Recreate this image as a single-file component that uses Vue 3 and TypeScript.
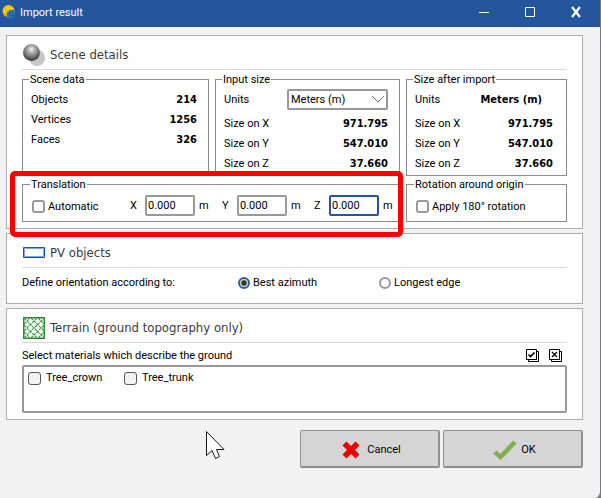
<script setup lang="ts">
import { ref } from 'vue'

interface Row {
  label: string
  value: string
}

const sceneData: Row[] = [
  { label: 'Objects', value: '214' },
  { label: 'Vertices', value: '1256' },
  { label: 'Faces', value: '326' },
]

const sizes: Row[] = [
  { label: 'Size on X', value: '971.795' },
  { label: 'Size on Y', value: '547.010' },
  { label: 'Size on Z', value: '37.660' },
]

const units = ref('Meters (m)')
const automatic = ref(false)
const rotate = ref(false)
const orientation = ref('azimuth')
const axes = ref([
  { name: 'X', value: '0.000', active: false },
  { name: 'Y', value: '0.000', active: false },
  { name: 'Z', value: '0.000', active: true },
])
const materials = ref([
  { name: 'Tree_crown', on: false },
  { name: 'Tree_trunk', on: false },
])

function setAll(on: boolean): void {
  materials.value.forEach((m) => (m.on = on))
}

function activate(name: string): void {
  axes.value.forEach((a) => (a.active = a.name === name))
}
</script>

<template>
  <div class="window">
    <header class="titlebar">
      <svg class="logo" width="14" height="14" viewBox="0 0 14 14">
        <circle cx="6.5" cy="6" r="6" fill="#fdc70c" />
        <path d="M1 9 A6 6 0 0 0 5 12 L5 8 Z" fill="#f59a12" />
        <path d="M5 7 Q8 4 13 5 L12 12 Q8 14 5 13 Z" fill="#2583c9" />
        <path d="M8 5.5V13 M10.5 5V13 M5 9.5Q9 7 12.5 8 M5 11.5Q9 10 12.5 10.5" stroke="#17518f" stroke-width=".7" fill="none" />
      </svg>
      <h1>Import result</h1>
      <div class="controls">
        <button type="button" aria-label="Minimize">
          <svg width="12" height="12" viewBox="0 0 12 12"><path d="M1 6.5H11" stroke="#fff" /></svg>
        </button>
        <button type="button" aria-label="Maximize">
          <svg width="12" height="12" viewBox="0 0 12 12"><path d="M1.5 1.5H10.5V10.5H1.5Z" stroke="#fff" fill="none" /></svg>
        </button>
        <button type="button" aria-label="Close">
          <svg width="12" height="12" viewBox="0 0 12 12"><path d="M2 1L10 11M10 1L2 11" stroke="#fff" stroke-width="2.2" /></svg>
        </button>
      </div>
    </header>

    <main>
      <section class="panel">
        <div class="head">
          <svg width="22" height="22" viewBox="0 0 22 22">
            <defs>
              <radialGradient id="ball" cx=".5" cy=".32" r=".65">
                <stop offset="0" stop-color="#f4f4f4" />
                <stop offset=".35" stop-color="#aaa" />
                <stop offset="1" stop-color="#3c3c3c" />
              </radialGradient>
            </defs>
            <circle cx="14" cy="14" r="8" fill="#c6c6c6" />
            <circle cx="8.5" cy="8.5" r="8.5" fill="url(#ball)" />
          </svg>
          <h2>Scene details</h2>
        </div>
        <div class="groups">
          <fieldset class="data">
            <legend>Scene data</legend>
            <dl>
              <div v-for="r in sceneData" :key="r.label" class="row">
                <dt>{{ r.label }}</dt>
                <dd>{{ r.value }}</dd>
              </div>
            </dl>
          </fieldset>
          <fieldset class="data">
            <legend>Input size</legend>
            <div class="row units">
              <label for="units">Units</label>
              <span class="combo">
                <select id="units" v-model="units">
                  <option>Meters (m)</option>
                  <option>Feet (ft)</option>
                </select>
                <svg width="14" height="8" viewBox="0 0 14 8"><path d="M1 1L7 7L13 1" fill="none" stroke="#777" /></svg>
              </span>
            </div>
            <dl>
              <div v-for="r in sizes" :key="r.label" class="row">
                <dt>{{ r.label }}</dt>
                <dd>{{ r.value }}</dd>
              </div>
            </dl>
          </fieldset>
          <fieldset class="data after">
            <legend>Size after import</legend>
            <dl>
              <div class="row units">
                <dt>Units</dt>
                <dd class="unit">{{ units }}</dd>
              </div>
              <div v-for="r in sizes" :key="r.label" class="row">
                <dt>{{ r.label }}</dt>
                <dd>{{ r.value }}</dd>
              </div>
            </dl>
          </fieldset>
          <div class="translation">
            <fieldset class="line">
              <legend>Translation</legend>
              <label class="check auto"><input v-model="automatic" type="checkbox" />Automatic</label>
              <div v-for="a in axes" :key="a.name" class="axis">
                <label :for="'axis-' + a.name">{{ a.name }}</label>
                <input :id="'axis-' + a.name" v-model="a.value" type="text" :class="{ active: a.active }" @focus="activate(a.name)" />
                <span>m</span>
              </div>
            </fieldset>
            <div class="highlight"></div>
          </div>
          <fieldset class="line">
            <legend>Rotation around origin</legend>
            <label class="check"><input v-model="rotate" type="checkbox" />Apply 180° rotation</label>
          </fieldset>
        </div>
      </section>

      <section class="panel">
        <div class="head">
          <svg width="22" height="22" viewBox="0 0 22 22"><path d="M.5 5.5H21.5V15.5H.5Z" fill="#fff" stroke="#0b4fd8" /><path d="M1.5 6.5H20.5V14.5H1.5Z" fill="none" stroke="#7ba3ee" /></svg>
          <h2>PV objects</h2>
        </div>
        <div class="orientation">
          <span>Define orientation according to:</span>
          <label class="check"><input v-model="orientation" type="radio" name="orientation" value="azimuth" />Best azimuth</label>
          <label class="check"><input v-model="orientation" type="radio" name="orientation" value="edge" />Longest edge</label>
        </div>
      </section>

      <section class="panel">
        <div class="head">
          <svg width="22" height="22" viewBox="0 0 22 22">
            <rect x=".75" y=".75" width="20.5" height="20.5" fill="#fff" stroke="#2e8b3a" stroke-width="1.5" />
            <path d="M1 7L7 1M1 14L14 1M1 21L21 1M8 21L21 8M15 21L21 15M1 15L7 21M1 8L14 21M1 1L21 21M8 1L21 14M15 1L21 7" stroke="#3c9447" stroke-width="1.1" stroke-dasharray="3 .8" fill="none" />
          </svg>
          <h2>Terrain (ground topography only)</h2>
        </div>
        <div class="pick">
          <span>Select materials which describe the ground</span>
          <button type="button" aria-label="Select all" @click="setAll(true)">
            <svg width="13" height="13" viewBox="0 0 13 13">
              <path d="M2.5 2.5H12.5V12.5H2.5Z" fill="#fff" stroke="#000" />
              <path d="M.5 .5H10.5V10.5H.5Z" fill="#fff" stroke="#000" />
              <path d="M2.5 5.5L4.5 7.5L8.5 3.5" fill="none" stroke="#000" stroke-width="1.6" />
            </svg>
          </button>
          <button type="button" aria-label="Clear all" @click="setAll(false)">
            <svg width="13" height="13" viewBox="0 0 13 13">
              <path d="M2.5 2.5H12.5V12.5H2.5Z" fill="#fff" stroke="#000" />
              <path d="M.5 .5H10.5V10.5H.5Z" fill="#fff" stroke="#000" />
              <path d="M3 3L8 8M8 3L3 8" stroke="#000" stroke-width="1.2" />
            </svg>
          </button>
        </div>
        <div class="list">
          <label v-for="m in materials" :key="m.name" class="check item"><input v-model="m.on" type="checkbox" />{{ m.name }}</label>
        </div>
      </section>

      <footer>
        <button type="button">
          <svg width="18" height="18" viewBox="0 0 18 18"><path d="M2.5 2.5L15.5 15.5M15.5 2.5L2.5 15.5" stroke="#e60000" stroke-width="5.6" /></svg>
          Cancel
        </button>
        <button type="button" class="ok">
          <svg width="24" height="20" viewBox="0 0 24 20"><path d="M2 12L7.5 17L22 2" fill="none" stroke="#7fb24e" stroke-width="4.6" /></svg>
          OK
        </button>
      </footer>
    </main>

    <svg class="cursor" width="19" height="29" viewBox="0 0 19 29">
      <path d="M.5 .5V24.5L6 19.5L9.5 27.5L13.5 25.5L10.5 18.5H18Z" fill="#fff" stroke="#14142a" />
    </svg>
  </div>
</template>

<style>
body {
  margin: 0;
  background: #77797c;
}
</style>

<style scoped>
* {
  box-sizing: border-box;
}
.window {
  position: relative;
  min-height: 100vh;
  margin-right: 1px;
  background: #f2f2f2;
  border-bottom-right-radius: 6px;
  font: 11px/14px Roboto, 'Liberation Sans', sans-serif;
  color: #000;
}
h1, h2, dl, dd, fieldset {
  margin: 0;
}
button {
  font: inherit;
  color: inherit;
}
.titlebar {
  display: flex;
  align-items: center;
  height: 27px;
  padding: 0 12px 4px 2px;
  background: #24559d;
  color: #fff;
}
h1 {
  flex: 1;
  padding: 2px 0 0 4px;
  font-size: 11px;
  font-weight: normal;
}
.controls {
  display: flex;
  gap: 22px;
}
.controls button {
  display: flex;
  justify-content: center;
  width: 24px;
  padding: 0;
  border: 0;
  background: none;
}
main {
  display: flex;
  flex-direction: column;
  gap: 4px;
  padding: 8px 17px 0 6px;
}
.panel {
  padding: 5px 15px 6px;
  border: 1px solid #acacac;
  background: #fff;
}
.head {
  display: flex;
  align-items: center;
  gap: 5px;
  height: 29px;
  padding-left: 1px;
  border-bottom: 1px solid #d9d9d9;
}
h2 {
  font: 13px/16px 'DejaVu Sans Condensed', 'DejaVu Sans', sans-serif;
  font-stretch: condensed;
  color: #3c3c3c;
}
.groups {
  display: grid;
  grid-template-columns: 187fr 185fr 161fr;
  gap: 1px 6px;
  padding-top: 2px;
}
fieldset {
  min-width: 0;
  padding: 0;
  border: 1px solid #8c8c8c;
}
legend {
  height: 14px;
  margin-left: -2px;
  padding: 1px 1px 0;
}
.data {
  padding: 3px 11px 2px 8px;
}
.after {
  padding-right: 13px;
}
.row {
  display: flex;
  align-items: center;
  justify-content: space-between;
  height: 20px;
}
.units {
  margin-bottom: 4px;
}
dt, dd, .row label {
  padding-top: 2px;
}
dd {
  font-family: 'DejaVu Sans Condensed', 'DejaVu Sans', sans-serif;
  font-weight: bold;
  font-stretch: condensed;
}
.unit {
  padding-right: 11px;
}
.combo {
  display: grid;
  align-items: center;
}
.combo > * {
  grid-area: 1 / 1;
}
.combo svg {
  justify-self: end;
  margin-right: 3px;
  pointer-events: none;
}
select {
  appearance: none;
  width: 101px;
  height: 21px;
  padding: 1px 18px 0 2px;
  border: 2px solid #999;
  border-radius: 2px;
  background: #fff;
  color: #000;
  font: inherit;
}
.translation {
  position: relative;
  grid-column: span 2;
}
.highlight {
  position: absolute;
  inset: -6px -3px -15px -12px;
  z-index: 1;
  border: 5px solid #fe0000;
  border-radius: 5px;
  pointer-events: none;
}
.line {
  display: flex;
  height: 45px;
  padding: 4px 0 0 9px;
}
.check {
  display: flex;
  align-items: center;
  gap: 3px;
  height: 23px;
}
.auto {
  flex: none;
  width: 98px;
}
.check input {
  appearance: none;
  flex: none;
  width: 13px;
  height: 13px;
  margin: 0;
  border: 2px solid #999;
  border-radius: 3px;
  background: #fff;
}
.check input[type='checkbox']:checked {
  background: #24559d;
}
.check input[type='radio'] {
  width: 12px;
  height: 12px;
  border-radius: 50%;
}
.check input[type='radio']:checked {
  border-color: #2a6199;
  background: radial-gradient(circle, #333 0 2px, #fff 4px);
}
.axis {
  display: grid;
  flex: none;
  grid-template-columns: 15px 50px 1fr;
  align-items: center;
  width: 92px;
  height: 21px;
}
.axis:last-child {
  width: 78px;
}
.axis input {
  width: 50px;
  height: 21px;
  padding: 0 0 0 1px;
  border: 2px solid #999;
  border-radius: 2px;
  outline: 0;
  font: inherit;
}
.axis .active {
  border-color: #24559d;
}
.axis span {
  padding-left: 4px;
}
.orientation {
  display: grid;
  grid-template-columns: 216fr 141fr 188fr;
  align-items: center;
  height: 29px;
}
.pick {
  display: flex;
  align-items: center;
  gap: 10px;
  height: 22px;
  padding: 2px 5px 0 0;
}
.pick span {
  flex: 1;
  padding-top: 2px;
}
.pick button {
  display: flex;
  padding: 0;
  border: 0;
  background: none;
}
.list {
  display: flex;
  height: 48px;
  padding: 4px;
  border: 2px solid #999;
  border-radius: 2px;
}
.item {
  gap: 5px;
  width: 96px;
  height: 14px;
  line-height: 16px;
}
.item input {
  border: 1px solid #555;
  background: #f2f2f2;
}
footer {
  display: flex;
  justify-content: flex-end;
  gap: 3px;
  padding-top: 6px;
}
footer button {
  display: flex;
  align-items: center;
  justify-content: center;
  gap: 7px;
  width: 140px;
  height: 38px;
  padding: 2px 0 0 4px;
  border: 1px solid #8f8f8f;
  border-right-width: 2px;
  border-bottom-width: 2px;
  border-radius: 2px;
  background: #d5d5d5;
}
.ok {
  gap: 4px;
}
.cursor {
  position: absolute;
  left: 206px;
  top: 431px;
}
</style>
